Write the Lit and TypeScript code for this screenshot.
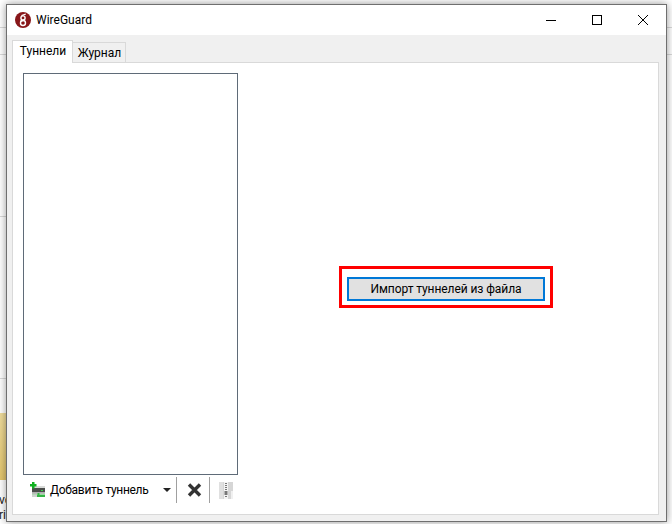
import { LitElement, html, css } from "lit";
import { customElement } from "lit/decorators.js";

@customElement("app-root")
export class AppRoot extends LitElement {
  static styles = css`
    :host { display: block; width: 672px; height: 524px; position: relative; overflow: hidden; background: #fff;
      font-family: Roboto, "Noto Sans", sans-serif; font-size: 12px; color: #000; }
    .line { position: absolute; height: 1px; background: #d9d9d9; }
    .yellow { position: absolute; left: 0; top: 413px; width: 6px; height: 67px; background: linear-gradient(#efdc9c, #e3c56c); }
    .frag { position: absolute; left: 0; font-size: 12px; line-height: 15px; width: 6px; overflow: hidden; white-space: nowrap; color: #222; }
    .frag span { display: block; margin-left: -1px; }
    .window { position: absolute; left: 6px; top: 4px; width: 659px; height: 516px; box-sizing: content-box;
      border: 1px solid #6f6f6f; background: #f0f0f0; display: flex; flex-direction: column;
      box-shadow: 0 0 8px rgba(0,0,0,.42); }
    .titlebar { height: 30px; background: #fff; display: flex; align-items: center; flex: none; }
    .appicon { margin-left: 8px; width: 16px; height: 16px; flex: none; }
    .title { margin-left: 5px; flex: 1; font-size: 12px; color: #000; }
    .wc { width: 46px; height: 30px; display: flex; align-items: center; justify-content: center; flex: none; }
    .wc svg { display: block; }
    .body { flex: 1; display: flex; flex-direction: column; padding: 5px 7px 6px 5px; min-height: 0; }
    .tabs { display: flex; align-items: flex-end; height: 22px; flex: none; position: relative; z-index: 1; }
    .tab { box-sizing: border-box; display: flex; align-items: center; justify-content: center; border: 1px solid #d9d9d9; }
    .tab.on { width: 61px; height: 23px; margin-bottom: -1px; background: #fff; border-bottom: none; padding: 0 0 3px 1px; }
    .tab.off { width: 53px; height: 20px; background: #f0f0f0; border-left: none; border-bottom: none; padding-left: 1px; }
    .pane { flex: 1; background: #fff; border: 1px solid #d9d9d9; display: grid; grid-template-columns: 215px 1fr; padding: 10px 0 0 10px; min-height: 0; }
    .left { display: flex; flex-direction: column; min-height: 0; }
    .list { box-sizing: border-box; height: 402px; border: 1px solid #5f6b78; background: #fff; flex: none; }
    .toolbar { display: flex; align-items: center; height: 26px; margin-top: 2px; flex: none; }
    .add { display: flex; align-items: center; margin-left: 7px; white-space: nowrap; }
    .add svg { display: block; }
    .add span { margin-left: 4px; width: 99px; letter-spacing: -.3px; }
    .caret { width: 0; height: 0; border-left: 4px solid transparent; border-right: 4px solid transparent; border-top: 4px solid #222; margin-left: 14px; }
    .sep { width: 1px; height: 26px; background: #a0a0a0; flex: none; }
    .sep.a { margin-left: 5px; }
    .x { margin: 0 7px 0 10px; display: block; }
    .zip { margin-left: 9px; display: block; }
    .right { display: flex; align-items: flex-start; padding: 193px 0 0 101px; }
    .focus { box-sizing: border-box; width: 214px; height: 42px; border: 3px solid #f00; padding: 8px 5px 4px 5px; }
    button { display: block; box-sizing: border-box; width: 198px; height: 24px; border: 2px solid #0078d7; background: #e1e1e1; font: inherit; color: #000; padding: 0; letter-spacing: -.08px; }
  `;

  render() {
    return html`
      <div class="line" style="left:0;top:27px;width:6px"></div>
      <div class="line" style="left:0;top:54px;width:6px"></div>
      <div class="line" style="left:0;top:216px;width:6px"></div>
      <div class="line" style="left:0;top:378px;width:6px"></div>
      <div class="line" style="left:666px;top:27px;width:6px"></div>
      <div class="line" style="left:666px;top:54px;width:6px"></div>
      <div class="yellow"></div>
      <div class="frag" style="top:493px"><span>vo</span></div>
      <div class="frag" style="top:508px"><span>ri</span></div>
      <div class="window">
        <div class="titlebar">
          <svg class="appicon" viewBox="0 0 16 16">
            <circle cx="8" cy="8" r="8" fill="#88171a"/>
            <circle cx="8" cy="6" r="2.1" fill="none" stroke="#fff" stroke-width="1.4"/>
            <circle cx="8" cy="11" r="2.5" fill="none" stroke="#fff" stroke-width="1.4"/>
            <path d="M6.5 3.6 10.8 2M10 7.6 5.2 9.4" stroke="#fff" stroke-width="1.2" fill="none"/>
          </svg>
          <div class="title">WireGuard</div>
          <div class="wc"><svg width="10" height="10" viewBox="0 0 10 10"><path d="M0 5.5H10" stroke="#000" stroke-width="1"/></svg></div>
          <div class="wc"><svg width="10" height="10" viewBox="0 0 10 10"><rect x=".5" y=".5" width="9" height="9" fill="none" stroke="#000"/></svg></div>
          <div class="wc"><svg width="10" height="10" viewBox="0 0 10 10"><path d="M0 0 10 10M10 0 0 10" stroke="#000" stroke-width="1"/></svg></div>
        </div>
        <div class="body">
          <div class="tabs">
            <div class="tab on">Туннели</div>
            <div class="tab off">Журнал</div>
          </div>
          <div class="pane">
            <div class="left">
              <div class="list"></div>
              <div class="toolbar">
                <div class="add">
                  <svg width="16" height="16" viewBox="0 0 16 16">
                    <path d="M2 4H15V7H2Z" fill="#d8dad8"/>
                    <path d="M2 6H15V10.5H2Z" fill="#4a4d4a"/>
                    <rect x="11" y="8" width="2" height="1" fill="#39d04a"/>
                    <path d="M2 10.5H15V12H2Z" fill="#b8bcb8"/>
                    <path d="M7.5 11H9.5V12.5H15V15H2V12.5H7.5Z" fill="#35b544"/>
                    <path d="M2 12.5H7V15H2Z" fill="#cfd2cf"/>
                    <path d="M2 0H4.5V2H6.5V4.5H4.5V6.5H2V4.5H0V2H2Z" fill="#0fb01f"/>
                  </svg>
                  <span>Добавить туннель</span>
                  <div class="caret"></div>
                </div>
                <div class="sep a"></div>
                <svg class="x" width="15" height="14" viewBox="0 0 15 14"><path d="M2 1.5 13 12.5M13 1.5 2 12.5" stroke="#333" stroke-width="3.4"/></svg>
                <div class="sep"></div>
                <svg class="zip" width="14" height="17" viewBox="0 0 14 17">
                  <rect width="14" height="17" fill="#d6d6d6"/>
                  <rect x="0" y="0" width="4" height="17" fill="#e0e0e0"/>
                  <rect x="5" y="0" width="4" height="17" fill="#f4f4f4"/>
                  <rect x="12" y="9" width="2" height="8" fill="#f0f0f0"/>
                  <path d="M6 1h2v1H6zM6 3h2v1H6zM6 5h2v1H6zM6 7h2v1H6zM5.5 9h3v4h-3zM6 14h2v1H6z" fill="#777"/>
                </svg>
              </div>
            </div>
            <div class="right">
              <div class="focus"><button>Импорт туннелей из файла</button></div>
            </div>
          </div>
        </div>
      </div>
    `;
  }
}
